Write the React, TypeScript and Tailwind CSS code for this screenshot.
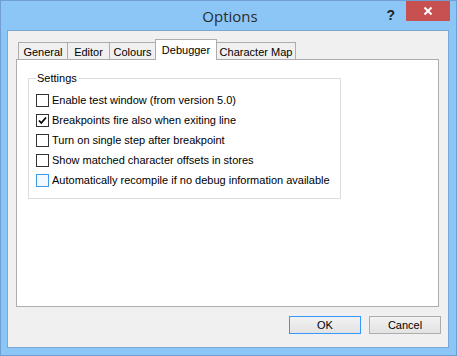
import React from "react";

const font = { fontFamily: '"Liberation Sans", Arial, sans-serif' };

const tabs = [
  { label: "General", w: "w-[50px]" },
  { label: "Editor", w: "w-[43px]" },
  { label: "Colours", w: "w-[47px]" },
  { label: "Debugger", w: "w-[62px]", active: true },
  { label: "Character Map", w: "w-[80px]" },
];

const options = [
  { label: "Enable test window (from version 5.0)" },
  { label: "Breakpoints fire also when exiting line", checked: true },
  { label: "Turn on single step after breakpoint" },
  { label: "Show matched character offsets in stores" },
  { label: "Automatically recompile if no debug information available", hot: true },
];

function CheckBox({ checked, hot }: { checked?: boolean; hot?: boolean }) {
  return (
    <div
      className={
        hot
          ? "w-[13px] h-[13px] border border-[#3c9be8] bg-[#f4f9ff] shrink-0"
          : "w-[13px] h-[13px] border border-[#333333] bg-white shrink-0 flex items-center justify-center"
      }
    >
      {checked && (
        <svg width="11" height="11" viewBox="0 0 11 11">
          <path d="M2 5.5 L4.3 8 L9 2.5" fill="none" stroke="#000" strokeWidth="1.8" />
        </svg>
      )}
    </div>
  );
}

export default function App() {
  return (
    <div
      className="w-[457px] h-[356px] border border-[#6f9fd0] bg-[#8bc6f7] flex flex-col text-[11px] text-black"
      style={font}
    >
      {/* title bar */}
      <div className="h-[29px] flex items-start relative">
        <div
          className="flex-1 text-center text-[15px] text-[#2b2b2b] pt-[4px] pl-[3px]"
          style={{ fontFamily: '"Open Sans", "Noto Sans", sans-serif' }}
        >
          Options
        </div>
        <div className="absolute right-[6px] top-0 flex items-start">
          <span className="text-[14px] font-bold text-[#222] mt-[4px] mr-[11px]">?</span>
          <div className="w-[44px] h-[20px] bg-[#c75050] flex items-center justify-center">
            <svg width="10" height="10" viewBox="0 0 10 10">
              <path d="M1.5 1.5 L8.5 8.5 M8.5 1.5 L1.5 8.5" stroke="#fff" strokeWidth="2" />
            </svg>
          </div>
        </div>
      </div>

      {/* client area */}
      <div className="ml-[6px] w-[442px] h-[318px] border border-[#7aa7d6] bg-[#f0f0f0] flex flex-col">
        {/* tab strip */}
        <div className="relative z-10 flex items-end h-[21px] mt-[8px] ml-[10px] -mb-px">
          {tabs.map((t, i) =>
            t.active ? (
              <div
                key={t.label}
                className={`${t.w} h-[21px] -ml-px bg-white border border-b-0 border-[#adadad] flex justify-center pt-[2px]`}
              >
                {t.label}
              </div>
            ) : (
              <div
                key={t.label}
                className={`${t.w} h-[17px] mb-px ${i > 0 ? "-ml-px" : ""} bg-[#f0f0f0] border border-b-0 border-[#adadad] flex justify-center pt-[1px]`}
              >
                {t.label}
              </div>
            )
          )}
        </div>

        {/* tab panel */}
        <div className="ml-[8px] w-[423px] h-[248px] border border-[#adadad] bg-white">
          <div className="relative ml-[11px] mt-[18px] w-[313px] h-[121px] border border-[#dcdcdc]">
            <span className="absolute left-[7px] -top-[8px] bg-white px-px leading-[14px]">Settings</span>
            <div className="flex flex-col gap-[7px] pt-[15px] pl-[7px]">
              {options.map((o) => (
                <div key={o.label} className="flex items-center gap-[3px] h-[13px]">
                  <CheckBox checked={o.checked} hot={o.hot} />
                  <span className="whitespace-nowrap">{o.label}</span>
                </div>
              ))}
            </div>
          </div>
        </div>

        {/* buttons */}
        <div className="flex justify-end gap-[8px] mt-[9px] mr-[7px]">
          <button className="w-[72px] h-[18px] border border-[#3399ff] bg-gradient-to-b from-[#f2f2f2] to-[#e3e3e3] flex items-center justify-center">
            OK
          </button>
          <button className="w-[72px] h-[18px] border border-[#adadad] bg-gradient-to-b from-[#f2f2f2] to-[#e3e3e3] flex items-center justify-center">
            Cancel
          </button>
        </div>
      </div>
    </div>
  );
}
